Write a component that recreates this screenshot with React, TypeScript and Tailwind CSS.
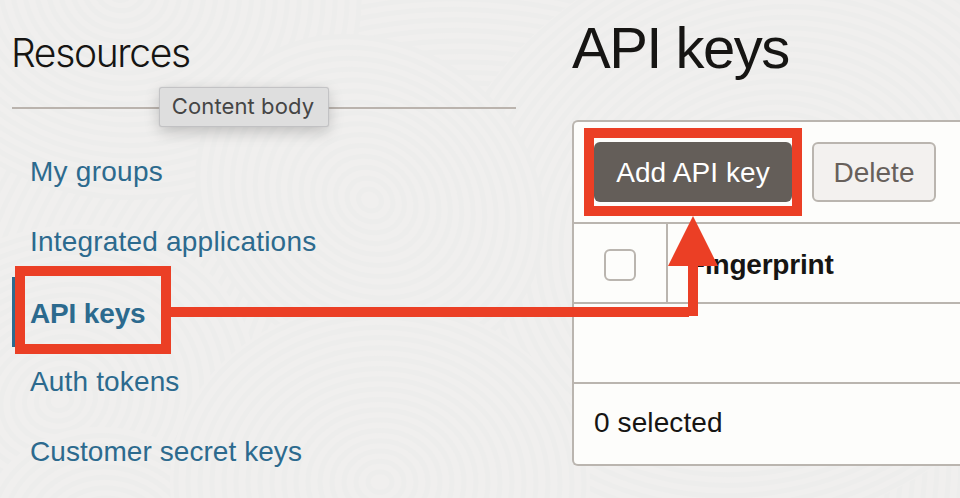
import clsx from "clsx";

const links = [
  { name: "My groups", spacing: "tracking-[0.25px]" },
  { name: "Integrated applications", spacing: "tracking-[0.2px]" },
  { name: "API keys", spacing: "tracking-[-0.15px]", active: true },
  { name: "Auth tokens", spacing: "tracking-[0.15px]" },
  { name: "Customer secret keys", spacing: "tracking-[0.06px]" },
];

// overlapping hills of contour rings, painted back to front
const hills = [
  { x: 500, y: 420, r: 560, tilt: 20 },
  { x: 760, y: 230, r: 340, tilt: -25 },
  { x: 120, y: -10, r: 240, tilt: 10 },
  { x: 370, y: 200, r: 180, tilt: 35 },
  { x: 60, y: 400, r: 200, tilt: -20 },
  { x: 110, y: 540, r: 130, tilt: 15 },
  { x: 380, y: 482, r: 210, tilt: 0 },
];

const Texture = () => (
  <svg
    className="absolute inset-0"
    width="960"
    height="498"
    fill="none"
    aria-hidden="true"
  >
    {hills.map((hill) => (
      <g
        key={`${hill.x}-${hill.y}`}
        transform={`rotate(${hill.tilt} ${hill.x} ${hill.y})`}
      >
        <ellipse
          cx={hill.x}
          cy={hill.y}
          rx={hill.r}
          ry={hill.r * 0.86}
          fill="#f0efee"
        />
        {Array.from({ length: Math.floor(hill.r / 12) }, (_, i) => (
          <ellipse
            key={i}
            cx={hill.x}
            cy={hill.y}
            rx={(i + 1) * 12}
            ry={(i + 1) * 12 * 0.86}
            stroke="#ededec"
            strokeWidth="5"
          />
        ))}
      </g>
    ))}
  </svg>
);

const Arrow = () => (
  <svg
    className="absolute inset-0 pointer-events-none"
    width="960"
    height="498"
    fill="#eb3f25"
    aria-hidden="true"
  >
    <path d="M171 307H688V266H668L693 216L718 266H698V316H689V317H171Z" />
  </svg>
);

const Sidebar = () => (
  <aside className="w-[504px] shrink-0">
    <div className="relative h-[109px] border-b-2 border-[#bab3ad]">
      <h2 className="-ml-px pt-[29px] text-[39px] leading-[48px] font-light tracking-[-1.35px] font-['Inter',sans-serif]">
        Resources
      </h2>
      <div className="absolute left-[148px] top-[88px] w-[168px] h-[38px] flex items-center justify-center rounded-[2px] pb-0.5 pr-0.5 bg-[#dedede] text-[#454545] text-[22px] leading-none tracking-[0.1px] font-['Inter',sans-serif] whitespace-nowrap shadow-[0_0_1px_0.5px_#c0c0c2,0_5px_16px_rgba(0,0,0,0.22)]">
        Content body
      </div>
    </div>
    <ul className="pt-7">
      {links.map((link) => (
        <li
          key={link.name}
          className={clsx(
            "relative h-[70px] flex items-center pl-[18px] text-[28px] text-[#2c6a8e] whitespace-nowrap",
            link.spacing,
            link.active && "font-bold pt-1"
          )}
        >
          {link.active && (
            <>
              <span className="absolute left-0 top-0 w-1.5 h-full bg-[#2c6a8e]" />
              <span className="absolute left-[3px] top-[-11px] w-[156px] h-[88px] border-10 border-[#eb3f25]" />
            </>
          )}
          {link.name}
        </li>
      ))}
    </ul>
  </aside>
);

const KeysTable = () => (
  <div className="h-[346px] border-2 border-r-0 border-[#bab5af] rounded-l-md bg-[#fdfdfb]">
    <div className="h-[102px] flex items-center gap-5 pl-5 border-b-2 border-[#bab5af] text-[28px]">
      <div className="relative">
        <button
          type="button"
          className="w-[198px] h-[60px] pt-0.5 rounded-md bg-[#645e59] text-white tracking-[0.1px] whitespace-nowrap"
        >
          Add API key
        </button>
        <span className="absolute -left-2.5 -top-3.5 w-[218px] h-[88px] border-10 border-[#eb3f25]" />
      </div>
      <button
        type="button"
        className="w-[124px] h-[60px] pt-0.5 rounded-md border-2 border-[#bab5af] bg-[#f3f1ef] text-[#67605b]"
      >
        Delete
      </button>
    </div>
    <div className="h-20 flex border-b-2 border-[#bab5af]">
      <div className="w-[94px] flex items-center pl-[30px] pt-1 border-r-2 border-[#bab5af]">
        <span className="size-8 rounded-md border-2 border-[#bab5af]" />
      </div>
      <div className="flex items-center pl-5 pt-1 text-[28px] tracking-[-0.2px] font-bold">
        Fingerprint
      </div>
    </div>
    <div className="h-20 border-b-2 border-[#bab5af]" />
    <div className="h-20 flex items-center pl-5 pb-0.5 text-[28px] tracking-[0.1px]">
      0 selected
    </div>
  </div>
);

const App = () => {
  return (
    <div className="relative w-[960px] h-[498px] overflow-hidden bg-[#f0efee] text-[#161513] font-['Liberation_Sans',Arial,sans-serif]">
      <Texture />
      <div className="relative flex gap-14 h-full pl-3">
        <Sidebar />
        <main className="flex-1">
          <h1 className="h-[120px] pt-[14px] text-[58px] leading-[68px] tracking-[-1.5px] whitespace-nowrap">
            API keys
          </h1>
          <KeysTable />
        </main>
      </div>
      <Arrow />
    </div>
  );
};

export default App;
